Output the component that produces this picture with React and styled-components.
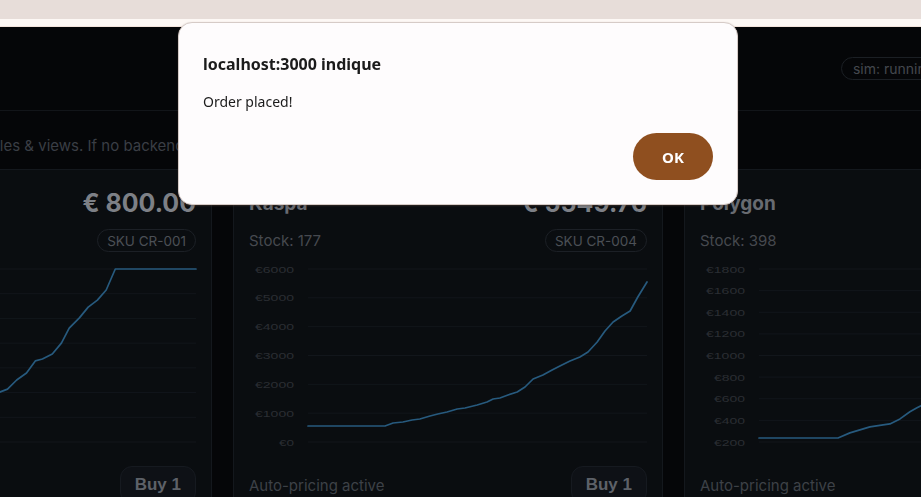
import React from 'react'
import styled, { createGlobalStyle } from 'styled-components'

const Global = createGlobalStyle`
  html, body { margin: 0; padding: 0; overflow: hidden; background: #050608; }
  body { font-family: Inter, "Noto Sans", sans-serif; }
  * { box-sizing: border-box; }
`

const Chrome = styled.div`
  height: 19px;
  background: #e7ddd9;
`

const ChromeStrip = styled.div`
  height: 8px;
  background: #fdf8f5;
  border-bottom: 1px solid #f3e4dc;
`

const Viewport = styled.div`
  overflow: hidden;
  width: 100%;
`

/* the page is scrolled sideways, so its left part sits off screen */
const Page = styled.div`
  width: 1380px;
  margin-left: -242px;
  color: #5f6369;
`

const Header = styled.header`
  height: 84px;
  padding: 0 24px;
  display: flex;
  align-items: center;
  justify-content: space-between;
  border-bottom: 1px solid #121519;
`

const Brand = styled.h1`
  margin: 0;
  font-size: 22px;
  font-weight: 700;
  color: #6a6e74;
`

const HeaderActions = styled.div`
  display: flex;
  align-items: center;
  gap: 12px;
`

const Pill = styled.span`
  display: inline-flex;
  align-items: center;
  height: 23px;
  padding: 0 11px;
  border: 1px solid #1b1f24;
  border-radius: 999px;
  font-size: 14px;
  color: #44484e;
  white-space: nowrap;
`

const HeaderButton = styled.button`
  height: 32px;
  padding: 0 15px;
  border-radius: 10px;
  border: 1px solid #161a20;
  background: #0e1116;
  color: #5d6168;
  font: 600 14px Inter, sans-serif;
`

const Intro = styled.p`
  margin: 0;
  padding: 25px 24px 13px 15px;
  font-size: 15px;
  line-height: 20px;
  color: #3a3e45;
  white-space: nowrap;
`

const CardGrid = styled.div`
  display: grid;
  grid-template-columns: repeat(3, 430px);
  gap: 21px;
  padding: 0 24px;
`

const Card = styled.section`
  background: #0a0d10;
  border: 1px solid #14181d;
  border-radius: 14px;
  padding: 18px 15px 15px;
  display: flex;
  flex-direction: column;
`

const Row = styled.div`
  display: flex;
  align-items: center;
  justify-content: space-between;
  margin-top: ${p => p.$gap || 0}px;
`

const Title = styled.h2`
  margin: 0;
  font-size: 19px;
  font-weight: 700;
  color: #686b71;
`

const Price = styled.div`
  font-size: 25px;
  line-height: 30px;
  font-weight: 700;
  color: #7d8086;
`

const Stock = styled.span`
  font-size: 15px;
  color: #46494f;
`

const Sku = styled(Pill)`
  color: #4c5056;
  border-color: #1c2026;
  padding: 0 9px;
  font-size: 13.5px;
`

const ChartBox = styled.svg`
  display: block;
  margin-top: 9px;
  overflow: visible;
`

const Footer = styled.div`
  display: flex;
  align-items: center;
  justify-content: space-between;
  margin-top: 15px;
`

const Note = styled.span`
  font-size: 15px;
  color: #3d4147;
`

const BuyButton = styled.button`
  height: 38px;
  padding: 0 14px;
  border-radius: 12px;
  border: 1px solid #161a20;
  background: #0e1116;
  color: #5d6168;
  font: 700 17px "Liberation Sans", Arial, sans-serif;
`

const Backdrop = styled.div`
  position: fixed;
  inset: 0;
`

const Dialog = styled.div`
  position: absolute;
  left: 178px;
  top: 22px;
  width: 560px;
  height: 183px;
  background: #fefcfd;
  border: 1px solid #d6cbc7;
  border-radius: 14px;
  box-shadow: 0 1px 2px rgba(90, 70, 60, 0.45);
  padding: 29px 24px 24px;
  display: flex;
  flex-direction: column;
  font-family: "Noto Sans", "Open Sans", sans-serif;
  color: #1b1b1b;
`

const DialogTitle = styled.div`
  font-size: 16px;
  font-weight: 700;
  line-height: 24px;
`

const DialogText = styled.div`
  margin-top: 16px;
  font-size: 14px;
  line-height: 20px;
`

const DialogActions = styled.div`
  margin-top: auto;
  display: flex;
  justify-content: flex-end;
`

const OkButton = styled.button`
  width: 80px;
  height: 47px;
  border: none;
  border-radius: 24px;
  background: #8f4f1f;
  color: #ffffff;
  font: 700 15px "Noto Sans", sans-serif;
`

const W = 398
const H = 190
const LEFT = 59
const TOP = 8
const BOTTOM = 181

const PriceChart = ({ ticks, points }) => {
  const min = ticks[ticks.length - 1]
  const max = ticks[0]
  const y = v => BOTTOM - ((v - min) / (max - min)) * (BOTTOM - TOP)
  const x = f => LEFT + f * (W - LEFT)
  const line = points.map(([f, v]) => `${x(f).toFixed(1)},${y(v).toFixed(1)}`).join(' ')
  return (
    <ChartBox width={W} height={H} viewBox={`0 0 ${W} ${H}`}>
      {ticks.map(t => {
        const label = `€${t}`
        return (
          <g key={t}>
            <line x1={LEFT} x2={W} y1={y(t)} y2={y(t)} stroke="#12161b" strokeWidth="1" />
            <text
              x={45}
              y={y(t) + 3.5}
              textAnchor="end"
              fontSize="9.5"
              fontFamily="Liberation Sans, Arial, sans-serif"
              fill="#2b2e33"
              textLength={label.length * 8 - 1}
              lengthAdjust="spacingAndGlyphs"
            >
              {label}
            </text>
          </g>
        )
      })}
      <polyline points={line} fill="none" stroke="#275a7e" strokeWidth="1.7" strokeLinejoin="round" strokeLinecap="round" />
    </ChartBox>
  )
}

const products = [
  {
    name: 'Cardano',
    price: '€ 800.00',
    stock: 64,
    sku: 'CR-001',
    ticks: [800, 700, 600, 500, 400, 300, 200, 100],
    points: [[0, 210], [0.12, 225], [0.25, 248], [0.35, 270], [0.421, 302], [0.444, 314], [0.471, 351], [0.5, 379], [0.526, 428], [0.547, 436], [0.576, 456], [0.603, 500], [0.626, 561], [0.656, 602], [0.682, 646], [0.709, 674], [0.735, 715], [0.762, 800], [1, 800]],
  },
  {
    name: 'Kaspa',
    price: '€ 5549.76',
    stock: 177,
    sku: 'CR-004',
    ticks: [6000, 5000, 4000, 3000, 2000, 1000, 0],
    points: [[0, 555], [0.227, 555], [0.251, 659], [0.28, 694], [0.307, 763], [0.33, 798], [0.36, 902], [0.383, 971], [0.41, 1040], [0.44, 1145], [0.463, 1179], [0.499, 1283], [0.528, 1387], [0.546, 1491], [0.566, 1526], [0.59, 1630], [0.617, 1734], [0.64, 1908], [0.664, 2185], [0.693, 2324], [0.72, 2497], [0.743, 2636], [0.773, 2809], [0.802, 2948], [0.826, 3121], [0.853, 3468], [0.876, 3850], [0.9, 4162], [0.926, 4370], [0.95, 4543], [0.973, 5029], [1, 5549]],
  },
  {
    name: 'Polygon',
    price: '€ 1240.18',
    stock: 398,
    sku: 'CR-007',
    ticks: [1800, 1600, 1400, 1200, 1000, 800, 600, 400, 200],
    points: [[0, 237], [0.233, 237], [0.268, 284], [0.327, 340], [0.366, 358], [0.386, 367], [0.416, 414], [0.445, 479], [0.466, 516], [0.478, 535], [0.55, 640], [0.65, 780], [0.75, 905], [0.85, 1020], [1, 1240]],
  },
]

const ProductCard = ({ product }) => (
  <Card>
    <Row>
      <Title>{product.name}</Title>
      <Price>{product.price}</Price>
    </Row>
    <Row $gap={11}>
      <Stock>Stock: {product.stock}</Stock>
      <Sku>SKU {product.sku}</Sku>
    </Row>
    <PriceChart ticks={product.ticks} points={product.points} />
    <Footer>
      <Note>Auto-pricing active</Note>
      <BuyButton>Buy 1</BuyButton>
    </Footer>
  </Card>
)

const App = () => {
  return (
    <>
      <Global />
      <Chrome />
      <ChromeStrip />
      <Viewport>
        <Page>
          <Header>
            <Brand>Crypto Shop</Brand>
            <HeaderActions>
              <Pill>sim: running</Pill>
              <HeaderButton>Pause</HeaderButton>
              <HeaderButton>Reset</HeaderButton>
            </HeaderActions>
          </Header>
          <Intro>Live products from Postgres tables &amp; views. If no backend is running, prices are simulated locally.</Intro>
          <CardGrid>
            {products.map(p => (
              <ProductCard key={p.sku} product={p} />
            ))}
          </CardGrid>
        </Page>
      </Viewport>
      <Backdrop>
        <Dialog role="alertdialog">
          <DialogTitle>localhost:3000 indique</DialogTitle>
          <DialogText>Order placed!</DialogText>
          <DialogActions>
            <OkButton>OK</OkButton>
          </DialogActions>
        </Dialog>
      </Backdrop>
    </>
  )
}

export default App
